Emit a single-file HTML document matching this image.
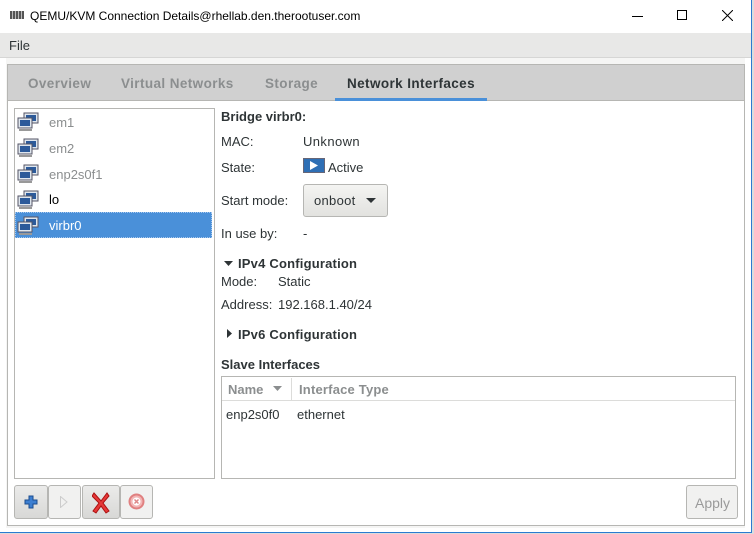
<!DOCTYPE html>
<html><head><style>
*{margin:0;padding:0;box-sizing:border-box}
body{width:754px;height:534px;background:#dcdcdc;font-family:"Liberation Sans",sans-serif;font-size:13px;color:#2e3436;position:relative;overflow:hidden}
.a{position:absolute;white-space:nowrap}
.win{position:absolute;left:0;top:0;width:752px;height:533px;background:#fff;border:1px solid #2b7bd0;border-top:none;border-left:none}
.b{font-weight:bold}
.g{color:#8b8e8f}
.t{font-size:13.5px;letter-spacing:0.4px}
.btn{position:absolute;border:1px solid #b6b6b3;border-radius:3px;background:linear-gradient(#f4f4f2,#e2e2df)}
</style></head><body>
<div class="win">
 <div class="a" style="left:0;top:0;width:751px;height:33px;background:#fff"></div>
 <div class="a" style="left:10px;top:11px;width:14px;height:8px;background:repeating-linear-gradient(90deg,#555 0 2px,#bbb 2px 3px)"></div>
 <div class="a" style="left:30px;top:9px;font-size:12px;color:#000">QEMU/KVM Connection Details@rhellab.den.therootuser.com</div>
 <div class="a" style="left:632px;top:16px;width:11px;height:1px;background:#000"></div>
 <div class="a" style="left:677px;top:10px;width:10px;height:10px;border:1px solid #000"></div>
 <svg class="a" style="left:722px;top:10px" width="11" height="11"><path d="M0 0L11 11M11 0L0 11" stroke="#000" stroke-width="1"/></svg>
 <div class="a" style="left:0;top:33px;width:751px;height:25px;background:#e8e8e7;border-bottom:1px solid #d6d6d5"></div>
 <div class="a" style="left:9px;top:38px;color:#2e3436">File</div>
 <div class="a" style="left:6px;top:58px;width:739px;height:470px;background:#f5f5f4"></div>
 <div class="a" style="left:7px;top:64px;width:738px;height:37px;background:#d0d0d0;border:1px solid #b6b6b3"></div>
 <div class="a b g t" style="left:28px;top:76px">Overview</div>
 <div class="a b g t" style="left:121px;top:76px">Virtual Networks</div>
 <div class="a b g t" style="left:265px;top:76px">Storage</div>
 <div class="a b t" style="left:347px;top:76px;color:#2e3436">Network Interfaces</div>
 <div class="a" style="left:335px;top:98px;width:152px;height:3px;background:#4a90d9"></div>
 <div class="a" style="left:7px;top:101px;width:738px;height:425px;background:#fff;border:1px solid #b6b6b3;border-top:none"></div>
 <div class="a" style="left:14px;top:108px;width:201px;height:371px;border:1px solid #b6b6b3;background:#fff"></div>
 <div class="a" style="left:15px;top:212px;width:197px;height:26px;background:#4a90d9;border:1px dotted #a7c8ee"></div>
 <svg width="0" height="0" style="position:absolute"><defs><g id="pc"><rect x="7" y="1" width="14" height="10" fill="#dfe6ee" stroke="#556"/><rect x="9" y="3" width="10" height="6" fill="#2c5a9a"/><rect x="1" y="6" width="14" height="10" fill="#dfe6ee" stroke="#556"/><rect x="3" y="8" width="10" height="6" fill="#2c5a9a"/><rect x="2" y="17" width="13" height="2" fill="#999"/></g></defs></svg>
 <svg class="a" style="left:17px;top:112px" width="24" height="21"><use href="#pc"/></svg>
 <svg class="a" style="left:17px;top:138px" width="24" height="21"><use href="#pc"/></svg>
 <svg class="a" style="left:17px;top:164px" width="24" height="21"><use href="#pc"/></svg>
 <svg class="a" style="left:17px;top:190px" width="24" height="21"><use href="#pc"/></svg>
 <svg class="a" style="left:17px;top:216px" width="24" height="21"><use href="#pc"/></svg>
 <div class="a g" style="left:49px;top:115px">em1</div>
 <div class="a g" style="left:49px;top:141px">em2</div>
 <div class="a g" style="left:49px;top:167px">enp2s0f1</div>
 <div class="a" style="left:49px;top:192px;color:#000">lo</div>
 <div class="a" style="left:49px;top:218px;color:#fff">virbr0</div>
 <div class="a b" style="left:221px;top:109px">Bridge virbr0:</div>
 <div class="a" style="left:221px;top:134px">MAC:</div><div class="a" style="left:303px;top:134px;letter-spacing:0.4px">Unknown</div>
 <div class="a" style="left:221px;top:160px">State:</div>
 <div class="a" style="left:303px;top:158px;width:22px;height:15px;background:#2e6fb5;border:1px solid #667"></div>
 <svg class="a" style="left:310px;top:161px" width="8" height="9"><path d="M0 0L8 4.5L0 9Z" fill="#fff"/></svg>
 <div class="a" style="left:328px;top:160px">Active</div>
 <div class="a" style="left:221px;top:193px">Start mode:</div>
 <div class="btn" style="left:303px;top:184px;width:85px;height:33px"></div>
 <div class="a" style="left:314px;top:193px;letter-spacing:0.3px">onboot</div>
 <svg class="a" style="left:366px;top:198px" width="10" height="6"><path d="M0 0H10L5 5Z" fill="#2e3436"/></svg>
 <div class="a" style="left:221px;top:226px">In use by:</div><div class="a" style="left:303px;top:226px">-</div>
 <svg class="a" style="left:224px;top:261px" width="9" height="6"><path d="M0 0H9L4.5 5Z" fill="#2e3436"/></svg>
 <div class="a b" style="left:238px;top:256px;letter-spacing:0.2px">IPv4 Configuration</div>
 <div class="a" style="left:221px;top:274px">Mode:</div><div class="a" style="left:278px;top:274px">Static</div>
 <div class="a" style="left:221px;top:297px">Address:</div><div class="a" style="left:278px;top:297px">192.168.1.40/24</div>
 <svg class="a" style="left:227px;top:329px" width="6" height="9"><path d="M0 0V9L5 4.5Z" fill="#2e3436"/></svg>
 <div class="a b" style="left:238px;top:327px;letter-spacing:0.2px">IPv6 Configuration</div>
 <div class="a b" style="left:221px;top:357px">Slave Interfaces</div>
 <div class="a" style="left:221px;top:376px;width:515px;height:103px;border:1px solid #b6b6b3;background:#fff"></div>
 <div class="a" style="left:222px;top:377px;width:513px;height:24px;border-bottom:1px solid #dcdcda"></div>
 <div class="a" style="left:291px;top:378px;width:1px;height:22px;background:#dcdcda"></div>
 <div class="a b g" style="left:228px;top:382px">Name</div>
 <svg class="a" style="left:273px;top:386px" width="9" height="5"><path d="M0 0H9L4.5 5Z" fill="#8b8e8f"/></svg>
 <div class="a b g" style="left:299px;top:382px;letter-spacing:0.2px">Interface Type</div>
 <div class="a" style="left:226px;top:407px">enp2s0f0</div><div class="a" style="left:297px;top:407px">ethernet</div>
 <div class="btn" style="left:14px;top:485px;width:34px;height:34px;background:linear-gradient(#ebebea,#d8d8d6)"></div>
 <svg class="a" style="left:24px;top:495px" width="14" height="14"><path d="M5 1h4v4h4v4h-4v4h-4v-4h-4v-4h4z" fill="#3d7fd1" stroke="#1c4d8f" stroke-width="1"/></svg>
 <div class="btn" style="left:48px;top:485px;width:33px;height:34px;background:#f1f1f0"></div>
 <svg class="a" style="left:60px;top:496px" width="8" height="12"><path d="M0.5 0.5L7 6L0.5 11.5Z" fill="none" stroke="#ccc"/></svg>
 <div class="btn" style="left:82px;top:485px;width:38px;height:34px;background:linear-gradient(#ebebea,#d8d8d6)"></div>
 <svg class="a" style="left:92px;top:492px" width="18" height="22"><path d="M2 1L9 9L15 1L17 4L11 11L17 19L14 21L9 14L4 21L1 19L7 11L0 4Z" fill="#e63838" stroke="#a11" stroke-width="1"/></svg>
 <div class="btn" style="left:120px;top:485px;width:33px;height:34px;background:#f1f1f0"></div>
 <svg class="a" style="left:128px;top:493px" width="17" height="17"><circle cx="8.5" cy="8.5" r="7" fill="#f2b5b5" stroke="#e08080" stroke-width="2"/><circle cx="8.5" cy="8.5" r="4" fill="#fff"/><path d="M6.5 6.5L10.5 10.5M10.5 6.5L6.5 10.5" stroke="#d88" stroke-width="1.5"/></svg>
 <div class="btn" style="left:686px;top:485px;width:52px;height:34px;background:#f1f1f0"></div>
 <div class="a" style="left:695px;top:495px;color:#9a9a9a;font-size:14px">Apply</div>
</div>
</body></html>
